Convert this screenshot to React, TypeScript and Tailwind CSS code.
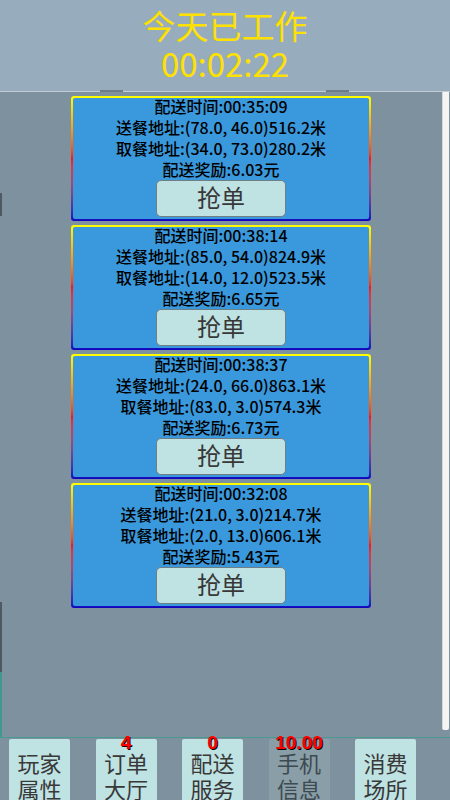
// App.tsx — order hall screen (delivery game)
const FONT = { fontFamily: '"Noto Sans CJK SC", "Noto Sans", sans-serif' };

type Order = {
  time: string;
  to: string;
  from: string;
  reward: string;
};

const ORDERS: Order[] = [
  { time: '00:35:09', to: '(78.0, 46.0)516.2米', from: '(34.0, 73.0)280.2米', reward: '6.03元' },
  { time: '00:38:14', to: '(85.0, 54.0)824.9米', from: '(14.0, 12.0)523.5米', reward: '6.65元' },
  { time: '00:38:37', to: '(24.0, 66.0)863.1米', from: '(83.0, 3.0)574.3米', reward: '6.73元' },
  { time: '00:32:08', to: '(21.0, 3.0)214.7米', from: '(2.0, 13.0)606.1米', reward: '5.43元' },
];

const TABS = [
  { top: '玩家', bottom: '属性', badge: null, dim: false },
  { top: '订单', bottom: '大厅', badge: '4', dim: false },
  { top: '配送', bottom: '服务', badge: '0', dim: false },
  { top: '手机', bottom: '信息', badge: '10.00', dim: true },
  { top: '消费', bottom: '场所', badge: null, dim: false },
];

// ── Order card ───────────────────────────────────────────────────────────────
function OrderCard({ order }: { order: Order }) {
  return (
    <div className="w-[300px] h-[125px] p-[2px] rounded-[3px] bg-gradient-to-b from-[#ffff00] via-[#ff1010] to-[#1000c0]">
      <div className="w-full h-full rounded-[2px] bg-[#3a99dd] flex flex-col items-center">
        <div className="-mt-[2px] flex flex-col items-center text-[16px] leading-[21px] text-black font-medium">
          <span>配送时间:{order.time}</span>
          <span>送餐地址:{order.to}</span>
          <span>取餐地址:{order.from}</span>
          <span>配送奖励:{order.reward}</span>
        </div>
        <button className="mt-0 w-[130px] h-[37px] rounded-[5px] bg-[#bfe2e3] border border-[#6f7f86] text-[24px] leading-none text-[#383838] pb-[3px]">
          抢单
        </button>
      </div>
    </div>
  );
}

export default function App() {
  return (
    <div className="w-[450px] h-[800px] flex flex-col bg-[#7e919e] overflow-hidden" style={FONT}>
      {/* Header */}
      <div className="h-[91px] bg-[#97acbd] flex flex-col items-center pt-[6px] text-[#ffe100] text-[33px] leading-[38px]">
        <span>今天已工作</span>
        <span>00:02:22</span>
      </div>

      {/* Order list */}
      <div className="relative flex-1 border-t border-[#c4ccd3]">
        <div className="absolute left-[100px] -top-[2px] w-[23px] h-[2px] bg-[#6d7d88]" />
        <div className="absolute left-[326px] -top-[2px] w-[23px] h-[2px] bg-[#6d7d88]" />
        <div className="absolute left-0 top-[101px] w-[2px] h-[23px] bg-[#4d5a63]" />
        <div className="absolute left-0 top-[510px] w-[2px] h-[70px] bg-[#4d5a63]" />
        <div className="absolute left-0 top-[580px] w-[2px] h-[65px] bg-[#3f9a8c]" />

        <div className="flex flex-col items-center gap-[4px] pt-[4px] pr-[8px]">
          {ORDERS.map((o) => (
            <OrderCard key={o.time} order={o} />
          ))}
        </div>

        {/* Scrollbar */}
        <div className="absolute right-[1px] top-0 w-[7px] h-[638px] bg-[#f4f4f4] border-l border-[#d8d8d8] rounded-b-[2px]" />
      </div>

      {/* Bottom tabs */}
      <div className="h-[63px] border-t border-[#4a9a90] flex gap-[25.5px] pl-[9px] pt-[1px]">
        {TABS.map((t) => (
          <div
            key={t.top}
            className={`relative w-[61px] h-[62px] rounded-t-[2px] flex flex-col items-center pt-[10px] text-[22px] leading-[26px] ${
              t.dim ? 'bg-[#8a9ea8] text-[#3d4a50]' : 'bg-[#bfe2e3] text-[#383838]'
            }`}
          >
            <span>{t.top}</span>
            <span>{t.bottom}</span>
            {t.badge && (
              <span
                className="absolute left-0 right-0 -top-[7px] text-center text-[19px] leading-[22px] font-bold text-[#ff0000]"
                style={{ fontFamily: '"Liberation Sans", Arial, sans-serif', textShadow: '1px 1px 0 #000' }}
              >
                {t.badge}
              </span>
            )}
          </div>
        ))}
      </div>
    </div>
  );
}
